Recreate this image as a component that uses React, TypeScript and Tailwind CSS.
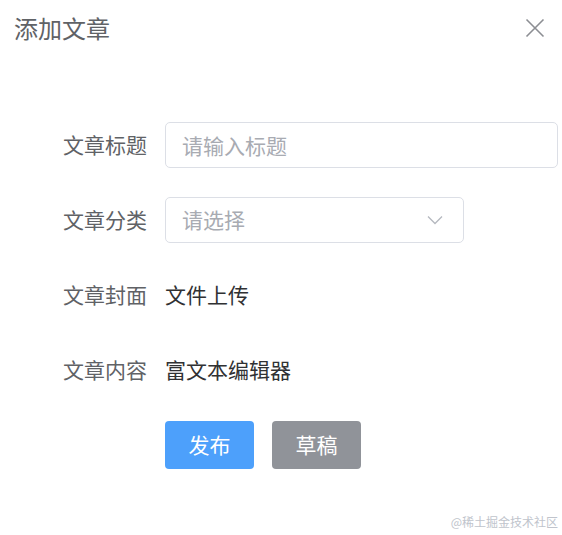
import React, { useState } from 'react';

const font = "font-['Noto_Sans_CJK_SC','Noto_Sans',sans-serif]";

const FormRow: React.FC<{ label: string; children: React.ReactNode }> = ({ label, children }) => (
  <div className="flex items-center h-[46px]">
    <label className="w-[165px] shrink-0 pr-[18px] text-right text-[21px] text-[#606266]">{label}</label>
    {children}
  </div>
);

const App: React.FC = () => {
  const [title, setTitle] = useState('');

  return (
    <div className={`relative w-[562px] h-[535px] bg-white ${font}`}>
      <div className="flex items-center justify-between pl-[14px] pr-[16px] pt-[8px] h-[48px]">
        <h2 className="text-[24px] leading-none text-[#606266]">添加文章</h2>
        <button className="w-[22px] h-[22px] flex items-center justify-center text-[#8c8e93]">
          <svg width="20" height="20" viewBox="0 0 20 20" fill="none" stroke="currentColor" strokeWidth="1.6">
            <path d="M1.5 1.5 L18.5 18.5 M18.5 1.5 L1.5 18.5" />
          </svg>
        </button>
      </div>

      <div className="mt-[74px] flex flex-col gap-[29px]">
        <FormRow label="文章标题">
          <input
            value={title}
            onChange={(e) => setTitle(e.target.value)}
            placeholder="请输入标题"
            className="w-[393px] h-[46px] rounded-[5px] border border-[#dcdfe6] px-[16px] text-[21px] text-[#606266] placeholder:text-[#a8abb2] outline-none"
          />
        </FormRow>
        <FormRow label="文章分类">
          <div className="w-[299px] h-[46px] rounded-[5px] border border-[#dcdfe6] pl-[16px] pr-[20px] flex items-center justify-between">
            <span className="text-[21px] text-[#a8abb2]">请选择</span>
            <svg width="16" height="10" viewBox="0 0 16 10" fill="none" stroke="#b5b8bf" strokeWidth="1.3">
              <path d="M1 1.5 L8 8.5 L15 1.5" />
            </svg>
          </div>
        </FormRow>
        <FormRow label="文章封面">
          <span className="text-[21px] text-[#303133]">文件上传</span>
        </FormRow>
        <FormRow label="文章内容">
          <span className="text-[21px] text-[#303133]">富文本编辑器</span>
        </FormRow>
        <div className="flex gap-[18px] pl-[165px] -mt-[1px]">
          <button className="w-[89px] h-[48px] rounded-[4px] bg-[#4da0fb] text-white text-[21px]">发布</button>
          <button className="w-[89px] h-[48px] rounded-[4px] bg-[#909399] text-white text-[21px]">草稿</button>
        </div>
      </div>

      <div className="absolute right-[4px] bottom-[4px] text-[12px] text-[#c0c4cc]">@稀土掘金技术社区</div>
    </div>
  );
};

export default App;
